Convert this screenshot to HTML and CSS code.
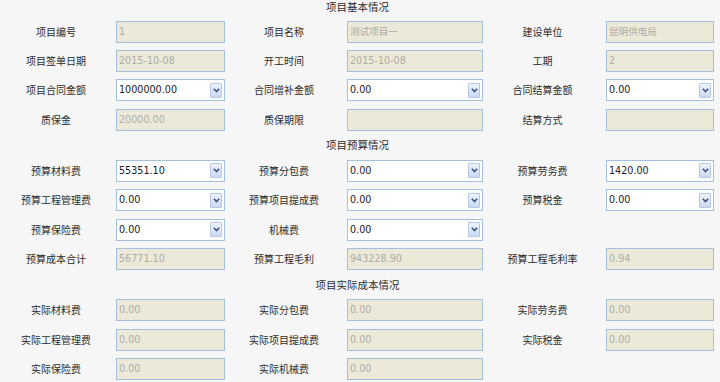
FILE: index.html
```html
<!DOCTYPE html>
<html lang="zh-CN">
<head>
<meta charset="utf-8">
<title>项目情况</title>
<link rel="stylesheet" href="styles.css">
</head>
<body>
<div class="page">
  <div class="title first">项目基本情况</div>
  <div class="row">
    <div class="label">项目编号</div><div class="field ro">1</div>
    <div class="label">项目名称</div><div class="field ro">测试项目一</div>
    <div class="label">建设单位</div><div class="field ro">昆明供电局</div>
  </div>
  <div class="row">
    <div class="label">项目签单日期</div><div class="field ro">2015-10-08</div>
    <div class="label">开工时间</div><div class="field ro">2015-10-08</div>
    <div class="label">工期</div><div class="field ro">2</div>
  </div>
  <div class="row">
    <div class="label">项目合同金额</div><div class="field sel"><span class="val">1000000.00</span><span class="arrow"><svg viewBox="0 0 7 5" width="7" height="5"><polyline points="0.8,0.8 3.5,3.6 6.2,0.8"/></svg></span></div>
    <div class="label">合同增补金额</div><div class="field sel"><span class="val">0.00</span><span class="arrow"><svg viewBox="0 0 7 5" width="7" height="5"><polyline points="0.8,0.8 3.5,3.6 6.2,0.8"/></svg></span></div>
    <div class="label">合同结算金额</div><div class="field sel"><span class="val">0.00</span><span class="arrow"><svg viewBox="0 0 7 5" width="7" height="5"><polyline points="0.8,0.8 3.5,3.6 6.2,0.8"/></svg></span></div>
  </div>
  <div class="row">
    <div class="label">质保金</div><div class="field ro">20000.00</div>
    <div class="label">质保期限</div><div class="field ro"></div>
    <div class="label">结算方式</div><div class="field ro"></div>
  </div>

  <div class="title">项目预算情况</div>
  <div class="row">
    <div class="label">预算材料费</div><div class="field sel"><span class="val">55351.10</span><span class="arrow"><svg viewBox="0 0 7 5" width="7" height="5"><polyline points="0.8,0.8 3.5,3.6 6.2,0.8"/></svg></span></div>
    <div class="label">预算分包费</div><div class="field sel"><span class="val">0.00</span><span class="arrow"><svg viewBox="0 0 7 5" width="7" height="5"><polyline points="0.8,0.8 3.5,3.6 6.2,0.8"/></svg></span></div>
    <div class="label">预算劳务费</div><div class="field sel"><span class="val">1420.00</span><span class="arrow"><svg viewBox="0 0 7 5" width="7" height="5"><polyline points="0.8,0.8 3.5,3.6 6.2,0.8"/></svg></span></div>
  </div>
  <div class="row">
    <div class="label">预算工程管理费</div><div class="field sel"><span class="val">0.00</span><span class="arrow"><svg viewBox="0 0 7 5" width="7" height="5"><polyline points="0.8,0.8 3.5,3.6 6.2,0.8"/></svg></span></div>
    <div class="label">预算项目提成费</div><div class="field sel"><span class="val">0.00</span><span class="arrow"><svg viewBox="0 0 7 5" width="7" height="5"><polyline points="0.8,0.8 3.5,3.6 6.2,0.8"/></svg></span></div>
    <div class="label">预算税金</div><div class="field sel"><span class="val">0.00</span><span class="arrow"><svg viewBox="0 0 7 5" width="7" height="5"><polyline points="0.8,0.8 3.5,3.6 6.2,0.8"/></svg></span></div>
  </div>
  <div class="row">
    <div class="label">预算保险费</div><div class="field sel"><span class="val">0.00</span><span class="arrow"><svg viewBox="0 0 7 5" width="7" height="5"><polyline points="0.8,0.8 3.5,3.6 6.2,0.8"/></svg></span></div>
    <div class="label">机械费</div><div class="field sel"><span class="val">0.00</span><span class="arrow"><svg viewBox="0 0 7 5" width="7" height="5"><polyline points="0.8,0.8 3.5,3.6 6.2,0.8"/></svg></span></div>
    <div class="label"></div><div class="empty"></div>
  </div>
  <div class="row">
    <div class="label">预算成本合计</div><div class="field ro">56771.10</div>
    <div class="label">预算工程毛利</div><div class="field ro">943228.90</div>
    <div class="label">预算工程毛利率</div><div class="field ro">0.94</div>
  </div>

  <div class="title">项目实际成本情况</div>
  <div class="row">
    <div class="label">实际材料费</div><div class="field ro">0.00</div>
    <div class="label">实际分包费</div><div class="field ro">0.00</div>
    <div class="label">实际劳务费</div><div class="field ro">0.00</div>
  </div>
  <div class="row">
    <div class="label">实际工程管理费</div><div class="field ro">0.00</div>
    <div class="label">实际项目提成费</div><div class="field ro">0.00</div>
    <div class="label">实际税金</div><div class="field ro">0.00</div>
  </div>
  <div class="row">
    <div class="label">实际保险费</div><div class="field ro">0.00</div>
    <div class="label">实际机械费</div><div class="field ro">0.00</div>
    <div class="label"></div><div class="empty"></div>
  </div>
</div>
</body>
</html>
```

FILE: styles.css
```css
html, body {
  margin: 0;
  padding: 0;
  background: #f6f6f6;
}
body {
  font-family: "Noto Sans CJK SC", "DejaVu Sans", sans-serif;
  font-size: 10px;
  color: #2b2b2b;
  height: 382px;
  overflow: hidden;
}
.page {
  width: 715px;
}
.title {
  height: 22px;
  line-height: 22px;
  text-align: center;
  color: #2b2b2b;
  font-size: 10.5px;
}
.title.first {
  height: 17px;
  line-height: 14px;
}
.row {
  display: grid;
  grid-template-columns: 116px 109px 122px 136px 123px 108px;
  height: 29.333px;
  align-items: center;
}
.label {
  text-align: center;
  padding-right: 4px;
  white-space: nowrap;
  line-height: 14px;
}
.field {
  box-sizing: border-box;
  height: 22px;
  border: 1px solid #a4c0de;
  padding-left: 2px;
  line-height: 20px;
  font-family: "DejaVu Sans", sans-serif;
  font-size: 9.6px;
  white-space: nowrap;
  overflow: hidden;
}
.field.ro {
  background: #ece9d8;
  color: #adada6;
  font-family: "DejaVu Sans", "Noto Sans CJK SC", sans-serif;
}
.field.sel {
  background: #ffffff;
  color: #1a1a1a;
  display: flex;
  align-items: center;
  justify-content: space-between;
  padding-right: 2px;
}
.val {
  line-height: 20px;
}
.arrow {
  box-sizing: border-box;
  width: 12px;
  height: 15px;
  border: 1px solid #b4c8e6;
  border-radius: 1px;
  background: linear-gradient(#eef3fc, #cbdaf2);
  display: flex;
  align-items: center;
  justify-content: center;
}
.arrow svg {
  display: block;
}
.arrow polyline {
  fill: none;
  stroke: #3f5482;
  stroke-width: 1.6;
}
```
